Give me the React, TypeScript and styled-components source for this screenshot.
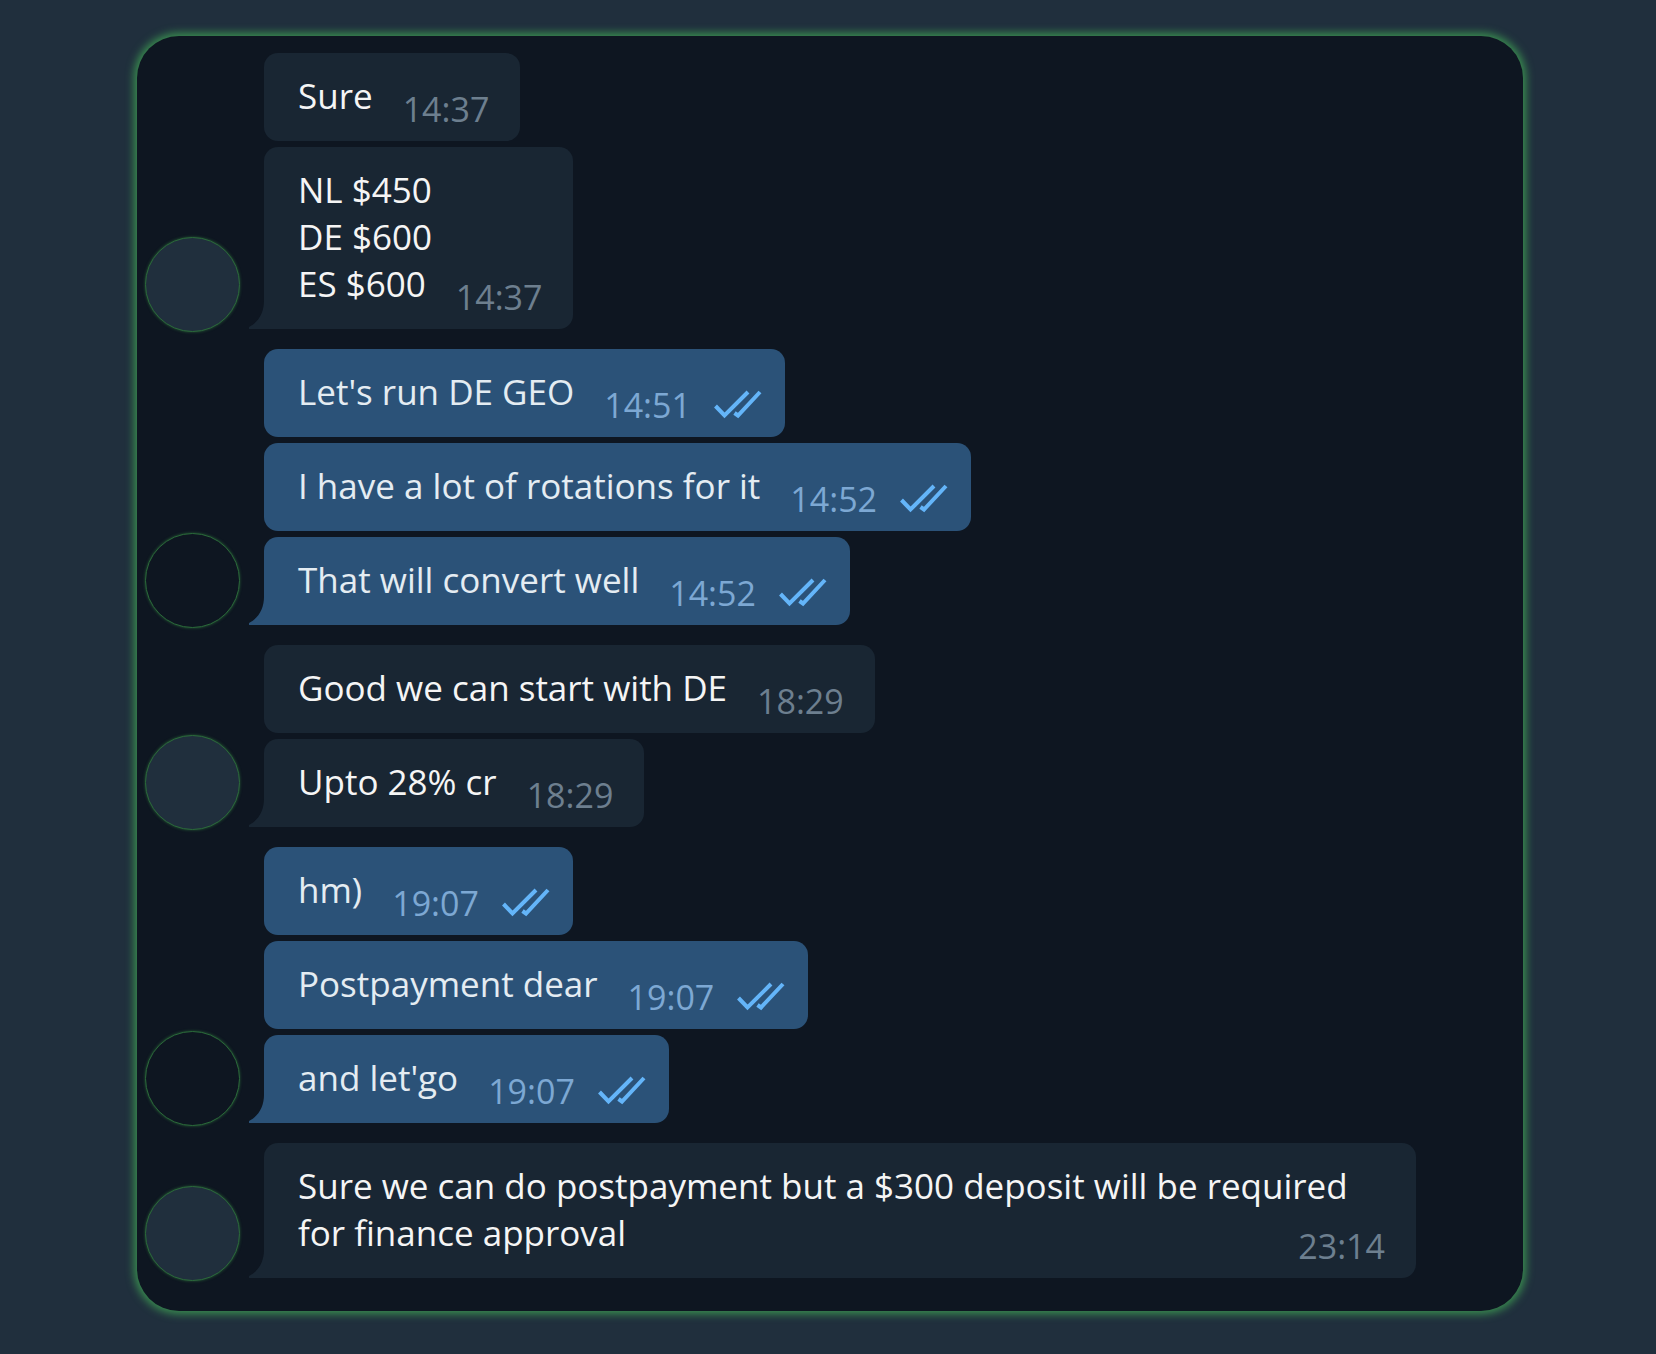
import React from "react";
import styled, { createGlobalStyle, css } from "styled-components";

const colors = {
  page: "#202f3d",
  panel: "#0e1621",
  incoming: "#192633",
  outgoing: "#2b5278",
  glow: "#3a8f50",
  ring: "#2b6a3a",
  tick: "#64b5f9",
};

type Side = "in" | "out";

interface Message {
  text: string;
  time: string;
}

interface MessageGroup {
  side: Side;
  messages: Message[];
}

const groups: MessageGroup[] = [
  {
    side: "in",
    messages: [
      { text: "Sure", time: "14:37" },
      { text: "NL $450\nDE $600\nES $600", time: "14:37" },
    ],
  },
  {
    side: "out",
    messages: [
      { text: "Let's run DE GEO", time: "14:51" },
      { text: "I have a lot of rotations for it", time: "14:52" },
      { text: "That will convert well", time: "14:52" },
    ],
  },
  {
    side: "in",
    messages: [
      { text: "Good we can start with DE", time: "18:29" },
      { text: "Upto 28% cr", time: "18:29" },
    ],
  },
  {
    side: "out",
    messages: [
      { text: "hm)", time: "19:07" },
      { text: "Postpayment dear", time: "19:07" },
      { text: "and let'go", time: "19:07" },
    ],
  },
  {
    side: "in",
    messages: [
      {
        text: "Sure we can do postpayment but a $300 deposit will be required for finance approval",
        time: "23:14",
      },
    ],
  },
];

const GlobalStyle = createGlobalStyle`
  *, *::before, *::after { box-sizing: border-box; }
  body {
    margin: 0;
    background: ${colors.page};
    font-family: "Open Sans", "Noto Sans", sans-serif;
  }
`;

const Page = styled.main`
  min-height: 100vh;
  padding: 36px 133px 43px 137px;
`;

const Panel = styled.section`
  display: flex;
  flex-direction: column;
  gap: 20px;
  padding: 17px 8px 33px;
  border-radius: 42px;
  background: ${colors.panel};
  box-shadow: 0 0 8px 3px ${colors.glow};
`;

const Group = styled.div`
  display: flex;
  align-items: flex-end;
  gap: 24px;
`;

const Avatar = styled.div<{ $side: Side }>`
  flex: none;
  width: 95px;
  height: 95px;
  margin-bottom: -3px;
  border: 1px solid ${colors.ring};
  border-radius: 50%;
  background: ${(p) => (p.$side === "in" ? colors.page : colors.panel)};
  box-shadow: 0 0 3px rgba(43, 106, 58, 0.8);
`;

const Stack = styled.div`
  display: flex;
  flex-direction: column;
  align-items: flex-start;
  gap: 6px;
  min-width: 0;
`;

const Bubble = styled.article<{ $side: Side; $tail: boolean }>`
  position: relative;
  display: flow-root;
  max-width: 1152px;
  padding: 19px 31px 22px 34px;
  border-radius: 14px;
  font-size: 35px;
  line-height: 47px;
  white-space: pre-line;
  color: #f5f5f5;
  background: ${colors.incoming};
  ${(p) =>
    p.$side === "out" &&
    css`
      padding-right: 24px;
      color: #e4ecf2;
      background: ${colors.outgoing};
    `}
  ${(p) => p.$tail && "border-bottom-left-radius: 0;"}
`;

const Meta = styled.span<{ $side: Side }>`
  float: right;
  display: flex;
  align-items: center;
  gap: 23px;
  margin: 14px 0 -14px 30px;
  font-size: 34px;
  color: ${(p) => (p.$side === "in" ? "#6d7f8f" : "#7da8d3")};
`;

const Tail = styled.svg`
  position: absolute;
  right: 100%;
  bottom: 0;
  width: 15px;
  height: 28px;
`;

const Ticks = styled.svg`
  flex: none;
  width: 47px;
  height: 28px;
  overflow: visible;
`;

function ReadTicks() {
  return (
    <Ticks viewBox="0 0 47 28" fill="none" stroke={colors.tick} strokeWidth="4" role="img" aria-label="Read">
      <path d="M1.5 14 L10.5 23.5 L34 0" />
      <path d="M20.5 21 L24 23.5 L46 0" />
    </Ticks>
  );
}

function ChatMessage({ message, side, last }: { message: Message; side: Side; last: boolean }) {
  return (
    <Bubble $side={side} $tail={last}>
      {message.text}
      <Meta $side={side}>
        <time>{message.time}</time>
        {side === "out" && <ReadTicks />}
      </Meta>
      {last && (
        <Tail viewBox="0 0 15 28" fill={side === "in" ? colors.incoming : colors.outgoing} aria-hidden="true">
          <path d="M15 0 C15 11 10 21 0 26 V28 H15 Z" />
        </Tail>
      )}
    </Bubble>
  );
}

export default function App() {
  return (
    <>
      <GlobalStyle />
      <Page>
        <Panel>
          {groups.map((group, g) => (
            <Group key={g}>
              <Avatar $side={group.side} />
              <Stack>
                {group.messages.map((message, m) => (
                  <ChatMessage
                    key={m}
                    message={message}
                    side={group.side}
                    last={m === group.messages.length - 1}
                  />
                ))}
              </Stack>
            </Group>
          ))}
        </Panel>
      </Page>
    </>
  );
}
